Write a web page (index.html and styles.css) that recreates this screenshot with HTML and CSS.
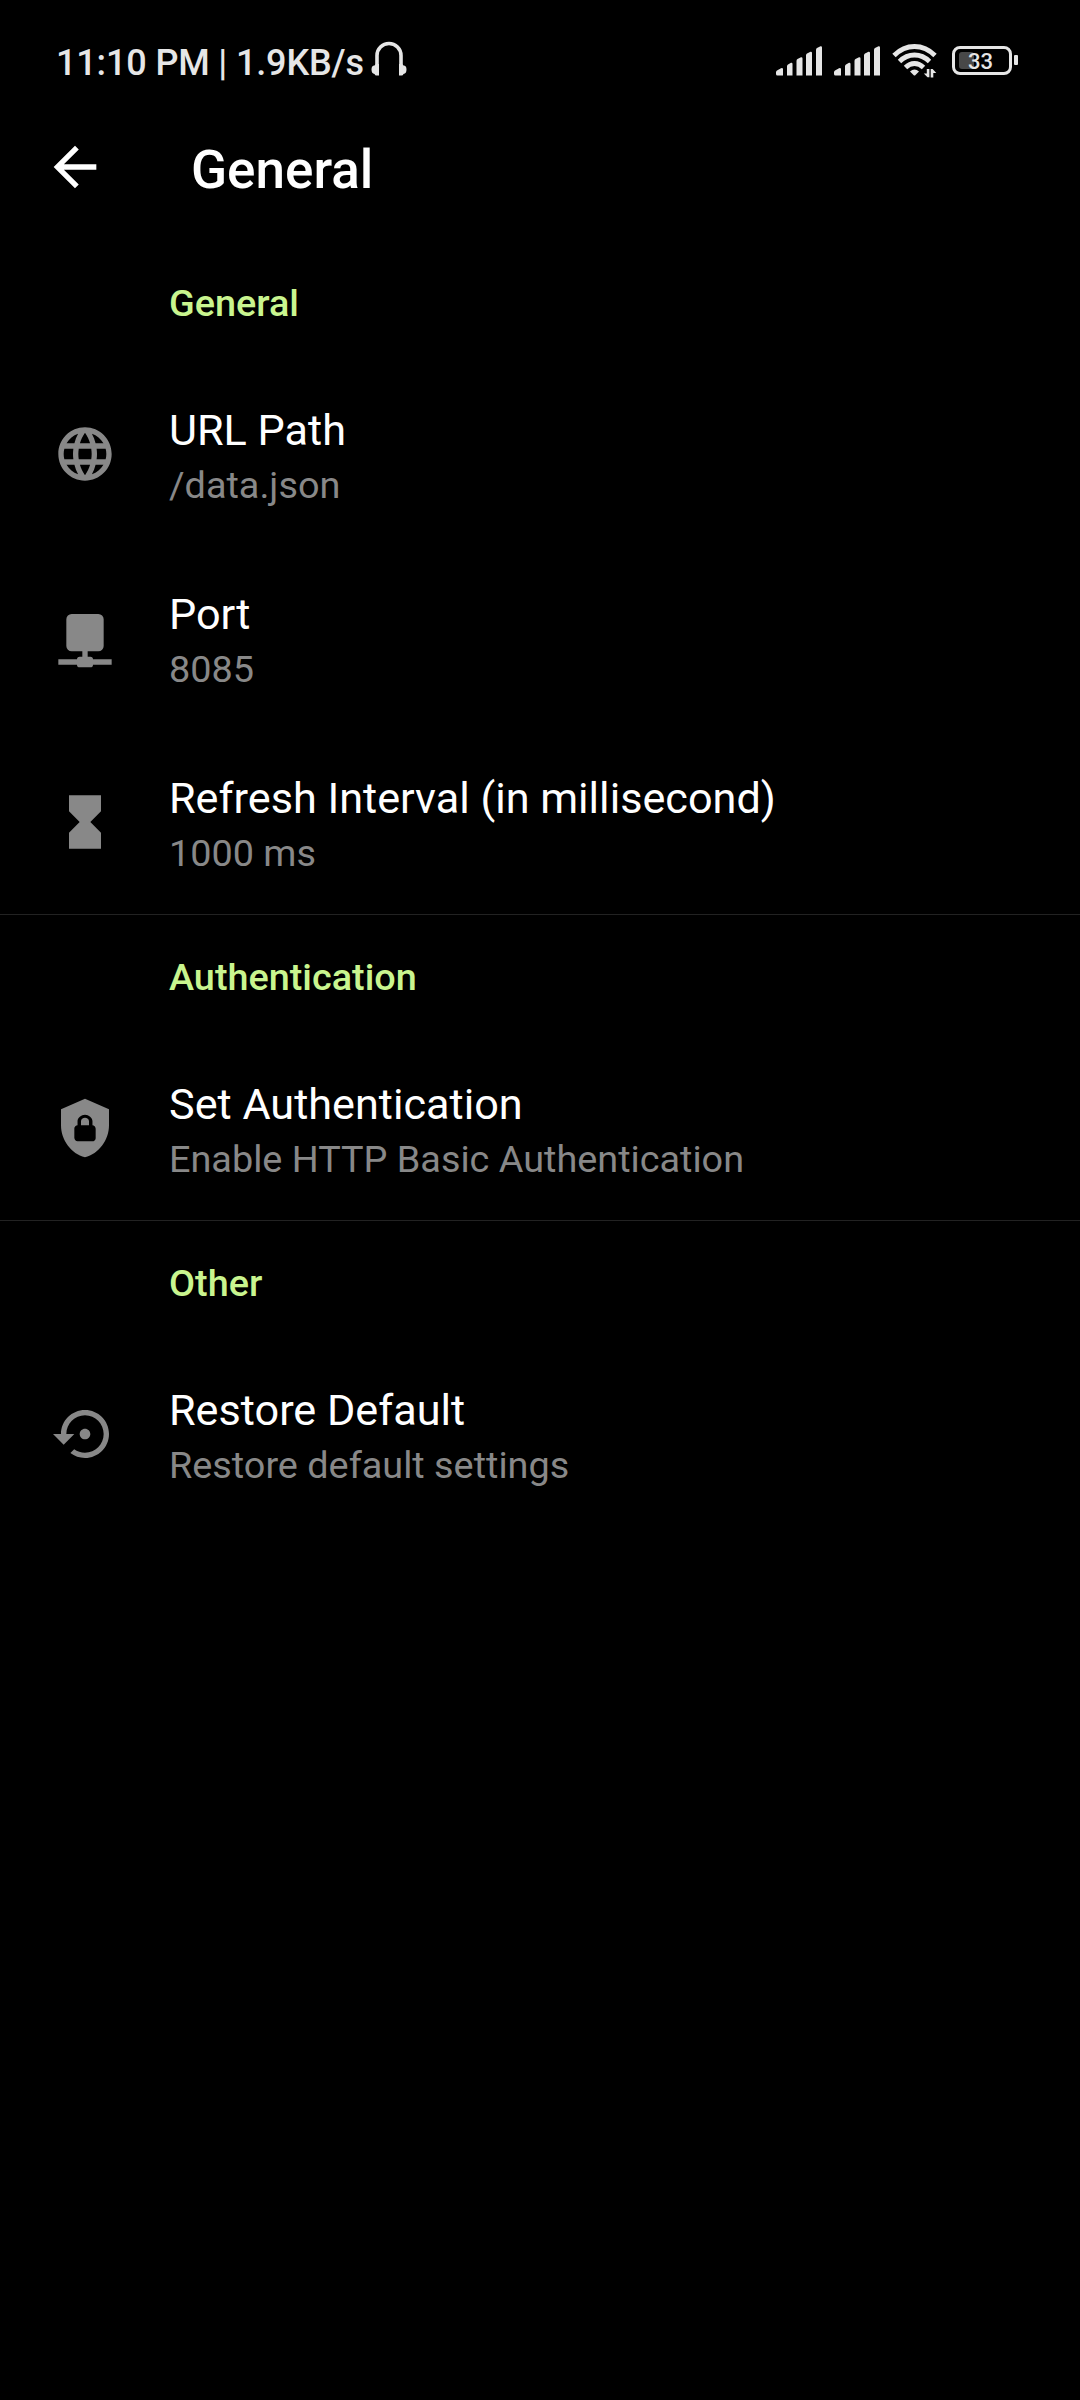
FILE: index.html
```html
<!DOCTYPE html>
<html lang="en">
<head>
<meta charset="utf-8">
<title>General</title>
<link rel="stylesheet" href="styles.css">
</head>
<body>
<div class="status-bar">
  <div class="status-left">
    <span class="status-text">11:10 PM | 1.9KB/s</span>
    <svg class="headphones" width="36" height="36" viewBox="0 0 36 36">
      <path d="M6 27V14.500a12 12 0 0 1 24 0V27" fill="none" stroke="currentColor" stroke-width="3.600"/>
      <path d="M8 23v11.500H5.500Q4 34.500 3.500 33Q0.500 32.500 0.500 28.500T3.500 24.500Q4 23 5.500 23zM28 23v11.500h2.500Q32 34.500 32.500 33Q35.500 32.500 35.500 28.500T32.500 24.500Q32 23 30.500 23z" fill="currentColor"/>
    </svg>
  </div>
  <div class="status-right">
    <svg class="signal" width="46" height="30" viewBox="0 0 46 30">
      <path d="M0 26.500Q0 25 1 24.500L5 22.300Q7 21.500 7 23.500V29.500H1.500Q0 29.500 0 28zM11 20.500Q11 19 12 18.500L15 16.800Q16.500 16.500 16.500 18V29.500H11zM20.500 15Q20.500 13.500 21.500 13L25 11.300Q26.500 11 26.500 12.500V29.500H20.500zM30 9.500Q30 8 31 7.500L34.500 5.800Q36 5.500 36 7V29.500H30zM40 4Q40 2.500 41 2L44.500 0.300Q46 0 46 1.500V29.500H40z" fill="currentColor"/>
    </svg>
    <svg class="signal" width="46" height="30" viewBox="0 0 46 30">
      <path d="M0 26.500Q0 25 1 24.500L5 22.300Q7 21.500 7 23.500V29.500H1.500Q0 29.500 0 28zM11 20.500Q11 19 12 18.500L15 16.800Q16.500 16.500 16.500 18V29.500H11zM20.500 15Q20.500 13.500 21.500 13L25 11.300Q26.500 11 26.500 12.500V29.500H20.500zM30 9.500Q30 8 31 7.500L34.500 5.800Q36 5.500 36 7V29.500H30zM40 4Q40 2.500 41 2L44.500 0.300Q46 0 46 1.500V29.500H40z" fill="currentColor"/>
    </svg>
    <svg class="wifi" width="46" height="36" viewBox="0 0 46 36">
      <g fill="none" stroke="currentColor" stroke-width="4.800">
        <path d="M2 12.500Q11 3.500 22.500 3.500T43 12.500"/>
        <path d="M7.500 18.500Q14 12 22.500 12T37.500 18.500"/>
        <path d="M13.500 24.500Q17.500 20.500 22.500 20.500T31.500 24.500"/>
      </g>
      <path d="M18 28.500q4.500-4 9 0l-3.500 3.500q-1 1-2 0z" fill="currentColor"/>
      <path d="M34.800 26h2.600v8.300h-1.900L31.800 30.500h3zM38.700 34.500V26h1.900l3.700 4h-3v4.500z" fill="currentColor"/>
    </svg>
    <div class="battery"><span class="battery-fill"></span><span class="battery-text">33</span></div>
    <span class="battery-tip"></span>
  </div>
</div>

<header class="app-bar">
  <svg class="back" width="64" height="64" viewBox="0 0 24 24"><path fill="currentColor" d="M20 11H7.830l5.590-5.590L12 4l-8 8 8 8 1.410-1.410L7.830 13H20v-2z"/></svg>
  <h1 class="app-title">General</h1>
</header>

<main>
  <section class="group">
    <h2 class="group-title">General</h2>
    <div class="row">
      <svg class="icon" viewBox="0 0 24 24"><path d="M11.990 2C6.470 2 2 6.480 2 12s4.470 10 9.990 10C17.520 22 22 17.520 22 12S17.520 2 11.990 2zm6.930 6h-2.950c-.32-1.250-.78-2.450-1.380-3.560 1.840.63 3.370 1.910 4.330 3.560zM12 4.040c.83 1.200 1.480 2.530 1.910 3.960h-3.820c.43-1.430 1.080-2.760 1.910-3.960zM4.260 14C4.100 13.360 4 12.690 4 12s.1-1.360.26-2h3.380c-.08.66-.14 1.320-.14 2 0 .68.06 1.340.14 2H4.260zm.82 2h2.950c.32 1.250.78 2.450 1.380 3.560-1.840-.63-3.370-1.900-4.330-3.560zm2.950-8H5.080c.96-1.660 2.490-2.930 4.330-3.560C8.810 5.550 8.350 6.750 8.030 8zM12 19.960c-.83-1.200-1.480-2.530-1.910-3.960h3.820c-.43 1.430-1.080 2.760-1.910 3.960zM14.340 14H9.660c-.09-.66-.16-1.320-.16-2 0-.68.07-1.350.16-2h4.680c.09.65.16 1.320.16 2 0 .68-.07 1.340-.16 2zm.25 5.560c.6-1.110 1.060-2.310 1.380-3.560h2.950c-.96 1.650-2.490 2.930-4.330 3.560zM16.360 14c.08-.66.14-1.320.14-2 0-.68-.06-1.340-.14-2h3.380c.16.64.26 1.310.26 2s-.1 1.360-.26 2h-3.380z"/></svg>
      <div class="text"><div class="title">URL Path</div><div class="summary">/data.json</div></div>
    </div>
    <div class="row">
      <svg class="icon" viewBox="0 0 24 24"><path d="M7 3h10a2 2 0 0 1 2 2v10a2 2 0 0 1-2 2h-4v2h1a1 1 0 0 1 1 1h7v2h-7a1 1 0 0 1-1 1h-4a1 1 0 0 1-1-1H2v-2h7a1 1 0 0 1 1-1h1v-2H7a2 2 0 0 1-2-2V5a2 2 0 0 1 2-2z"/></svg>
      <div class="text"><div class="title">Port</div><div class="summary">8085</div></div>
    </div>
    <div class="row">
      <svg class="icon" viewBox="0 0 24 24"><path d="M6 2v6h.01L6 8.010 10 12l-4 4 .01.01H6V22h12v-5.990h-.01L18 16l-4-4 4-3.990-.01-.01H18V2z"/></svg>
      <div class="text"><div class="title">Refresh Interval (in millisecond)</div><div class="summary">1000 ms</div></div>
    </div>
  </section>
  <section class="group divided">
    <h2 class="group-title">Authentication</h2>
    <div class="row">
      <svg class="icon" viewBox="0 0 24 24"><path fill-rule="evenodd" d="M12 1L3 5v6c0 5.550 3.840 10.740 9 12 5.160-1.260 9-6.450 9-12V5zM12 7C13.400 7 14.800 8.100 14.800 9.500V11C15.400 11 16 11.600 16 12.300V15.800C16 16.400 15.400 17 14.700 17H9.200C8.600 17 8 16.400 8 15.700V12.200C8 11.600 8.600 11 9.200 11V9.500C9.200 8.100 10.600 7 12 7M12 8.200C11.200 8.200 10.500 8.700 10.500 9.500V11H13.500V9.500C13.500 8.700 12.800 8.200 12 8.200Z"/></svg>
      <div class="text"><div class="title">Set Authentication</div><div class="summary">Enable HTTP Basic Authentication</div></div>
    </div>
  </section>
  <section class="group divided">
    <h2 class="group-title">Other</h2>
    <div class="row">
      <svg class="icon" viewBox="0 0 24 24"><path d="M14 12c0-1.100-.9-2-2-2s-2 .9-2 2 .9 2 2 2 2-.9 2-2zm-2-9c-4.970 0-9 4.030-9 9H0l4 4 4-4H5c0-3.870 3.130-7 7-7s7 3.130 7 7-3.130 7-7 7c-1.510 0-2.910-.49-4.060-1.300l-1.420 1.440C8.040 20.300 9.940 21 12 21c4.970 0 9-4.030 9-9s-4.030-9-9-9z"/></svg>
      <div class="text"><div class="title">Restore Default</div><div class="summary">Restore default settings</div></div>
    </div>
  </section>
</main>
</body>
</html>
```
FILE: styles.css
```css
* { box-sizing: border-box; }
body {
  margin: 0;
  min-height: 2400px;
  background: #000;
  color: #fff;
  font-family: Roboto, sans-serif;
}
svg { display: block; flex: none; }
.status-bar {
  display: flex;
  justify-content: space-between;
  height: 100px;
  padding: 0 62px 0 56px;
  color: #e6e6e6;
}
.status-left, .status-right { display: flex; align-items: flex-start; }
.status-text {
  padding-top: 42px;
  font-size: 36px;
  line-height: 42px;
  font-weight: 500;
  letter-spacing: -0.15px;
  white-space: nowrap;
}
.headphones { margin: 41px 0 0 7px; }
.signal { margin: 46px 12px 0 0; }
.wifi { margin: 43px 14px 0 0; }
.battery {
  display: flex;
  align-items: center;
  justify-content: center;
  position: relative;
  width: 60px;
  height: 29px;
  margin-top: 46px;
  border: 3px solid currentColor;
  border-radius: 8px;
}
.battery-fill {
  position: absolute;
  left: 4px;
  top: 3px;
  width: 15px;
  height: 17px;
  border-radius: 3px;
  background: #484848;
}
.battery-text {
  position: relative;
  padding: 2px 3px 0 0;
  font-size: 22px;
  line-height: 24px;
  font-weight: 500;
}
.battery-tip {
  width: 4px;
  height: 10px;
  margin: 55px 0 0 2px;
  border-radius: 1px;
  background: currentColor;
}
.app-bar {
  display: flex;
  align-items: center;
  height: 140px;
  padding: 0 0 6px 43px;
}
.app-title {
  margin: 5px 0 0 84px;
  font-size: 53px;
  line-height: 62px;
  font-weight: 500;
}
.divided { box-shadow: inset 0 1px #222; }
.group-title {
  height: 122px;
  margin: 0;
  padding: 40px 0 0 169px;
  color: #c9f58f;
  font-size: 37.800px;
  line-height: 46px;
  font-weight: 500;
}
.row {
  display: flex;
  align-items: center;
  height: 184px;
  padding-left: 53px;
}
.icon { width: 64px; height: 64px; fill: #888; }
.text {
  align-self: flex-start;
  padding-top: 40px;
  margin-left: 52px;
}
.title { font-size: 43.200px; line-height: 58px; }
.summary {
  margin-top: 1px;
  color: #888;
  font-size: 37.800px;
  line-height: 48px;
}
```
